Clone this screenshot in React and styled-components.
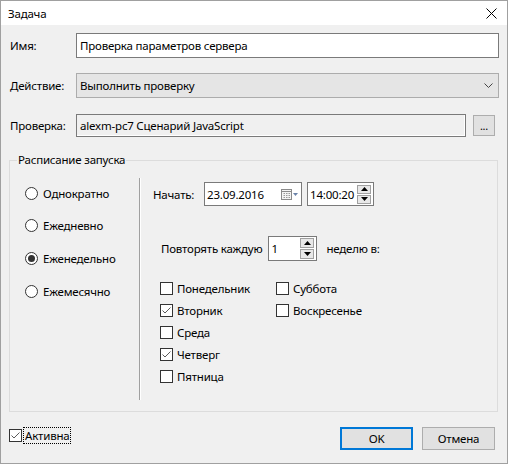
import React from 'react';
import styled, { createGlobalStyle } from 'styled-components';

const GlobalStyle = createGlobalStyle`
  html, body {
    margin: 0;
    padding: 0;
    background: #f0f0f0;
  }
  body {
    font-family: "Noto Sans", "Segoe UI", sans-serif;
    font-size: 11.5px;
    letter-spacing: -0.2px;
    color: #000;
  }
`;

const Window = styled.div`
  width: 508px;
  height: 464px;
  box-sizing: border-box;
  border: 1px solid #a0a0a0;
  background: #f0f0f0;
  display: flex;
  flex-direction: column;
`;

const TitleBar = styled.div`
  height: 24px;
  background: #ffffff;
  display: flex;
  align-items: center;
  justify-content: space-between;
  padding: 0 10px 0 7px;
`;

const Content = styled.div`
  flex: 1;
  display: flex;
  flex-direction: column;
  padding: 8px 8px 0 8px;
`;

const FieldRow = styled.div`
  display: grid;
  grid-template-columns: ${(p) => (p.$withButton ? '67px 1fr 29px' : '67px 1fr')};
  align-items: center;
  margin-top: ${(p) => p.$top || 0}px;
  padding-right: ${(p) => (p.$withButton ? 4 : 0)}px;
`;

const Label = styled.span`
  padding-left: 1px;
  white-space: nowrap;
`;

const TextBox = styled.div`
  box-sizing: border-box;
  height: ${(p) => p.$h || 25}px;
  border: 1px solid #7a7a7a;
  background: ${(p) => (p.$readOnly ? '#f0f0f0' : '#ffffff')};
  box-shadow: ${(p) => (p.$readOnly ? 'inset -1px -1px 0 #ffffff' : 'none')};
  display: flex;
  align-items: center;
  padding: 0 3px;
  white-space: nowrap;
  overflow: hidden;
`;

const Select = styled.div`
  box-sizing: border-box;
  height: 25px;
  border: 1px solid #acacac;
  background: #e5e5e5;
  display: flex;
  align-items: center;
  justify-content: space-between;
  padding: 0 5px 0 3px;
`;

const SmallButton = styled.div`
  box-sizing: border-box;
  height: 21px;
  margin-left: 7px;
  border: 1px solid #adadad;
  background: #e1e1e1;
  display: flex;
  align-items: center;
  justify-content: center;
  font-size: 11px;
  line-height: 1;
`;

const Group = styled.fieldset`
  margin: 15px 1px 0 0;
  padding: 0;
  border: 1px solid #dcdcdc;
  min-width: 0;
`;

const Legend = styled.legend`
  margin-left: 7px;
  padding: 0 1px;
  line-height: 16px;
`;

const GroupBody = styled.div`
  display: grid;
  grid-template-columns: 129px 2px 1fr;
  height: 243px;
`;

const RadioColumn = styled.div`
  display: flex;
  flex-direction: column;
  gap: 16.7px;
  padding: 17px 0 0 15px;
`;

const OptionRow = styled.label`
  display: flex;
  align-items: center;
  height: 16px;
  gap: ${(p) => p.$gap || 4}px;
  white-space: nowrap;
`;

const RadioCircle = styled.span`
  box-sizing: border-box;
  width: 13px;
  height: 13px;
  border-radius: 50%;
  border: 1px solid #333333;
  background: #ffffff;
  display: flex;
  align-items: center;
  justify-content: center;
  &::after {
    content: '';
    width: 7px;
    height: 7px;
    border-radius: 50%;
    background: ${(p) => (p.$checked ? '#333333' : 'transparent')};
  }
`;

const Separator = styled.div`
  margin: 10px 0 11px;
  border-left: 1px solid #a0a0a0;
  border-right: 1px solid #ffffff;
`;

const RightColumn = styled.div`
  display: flex;
  flex-direction: column;
  padding: 14px 0 0 12px;
`;

const StartRow = styled.div`
  display: flex;
  align-items: center;
`;

const StartLabel = styled.span`
  width: 51px;
`;

const Picker = styled.div`
  box-sizing: border-box;
  width: ${(p) => p.$w}px;
  height: ${(p) => p.$h || 24}px;
  margin-left: ${(p) => p.$ml || 0}px;
  border: 1px solid #7a7a7a;
  background: #ffffff;
  display: flex;
  align-items: center;
  justify-content: space-between;
  padding: 0 2px 0 2px;
`;

const SpinStack = styled.div`
  display: flex;
  flex-direction: column;
  gap: 1px;
`;

const SpinButton = styled.div`
  box-sizing: border-box;
  width: 14px;
  height: ${(p) => p.$h || 9}px;
  border: 1px solid #a0a0a0;
  background: #e8e8e8;
  display: flex;
  align-items: center;
  justify-content: center;
`;

const RepeatRow = styled.div`
  display: flex;
  align-items: center;
  gap: 6px;
  margin: 30px 0 0 8px;
`;

const RepeatTail = styled.span`
  margin-left: 3px;
`;

const DaysGrid = styled.div`
  display: grid;
  grid-template-columns: 116px auto;
  grid-auto-flow: column;
  grid-template-rows: repeat(5, 16px);
  row-gap: 6px;
  margin: 19px 0 0 7px;
  justify-content: start;
`;

const Box = styled.span`
  box-sizing: border-box;
  width: 13px;
  height: 13px;
  border: 1px solid #333333;
  background: #ffffff;
  display: flex;
  align-items: center;
  justify-content: center;
  flex-shrink: 0;
`;

const Footer = styled.div`
  display: flex;
  align-items: flex-start;
  margin-top: 15px;
  padding-right: 4px;
`;

const ActiveOption = styled.label`
  display: flex;
  align-items: center;
  gap: 2px;
  height: 16px;
  flex: 1;
`;

const FocusText = styled.span`
  outline: 1px dotted #000;
  outline-offset: 0;
  padding: 0 1px;
  line-height: 15px;
`;

const DialogButton = styled.div`
  box-sizing: border-box;
  width: 73px;
  height: 23px;
  margin-left: ${(p) => p.$ml || 0}px;
  border: ${(p) => (p.$primary ? '2px solid #0078d7' : '1px solid #adadad')};
  background: #e1e1e1;
  display: flex;
  align-items: center;
  justify-content: center;
`;

const Check = () => (
  <svg width="11" height="11" viewBox="0 0 11 11">
    <polyline points="1.5,5.5 4,8 9.5,2.5" fill="none" stroke="#5a5a5a" strokeWidth="1" />
  </svg>
);

const CheckOption = ({ checked, children }) => (
  <OptionRow $gap={4}>
    <Box>{checked && <Check />}</Box>
    <span>{children}</span>
  </OptionRow>
);

const Arrow = ({ up }) => (
  <svg width="7" height="4" viewBox="0 0 7 4">
    <polygon points={up ? '0,4 7,4 3.5,0' : '0,0 7,0 3.5,4'} fill="#000" />
  </svg>
);

const Spinner = ({ h }) => (
  <SpinStack>
    <SpinButton $h={h}><Arrow up /></SpinButton>
    <SpinButton $h={h}><Arrow /></SpinButton>
  </SpinStack>
);

const CalendarIcon = () => (
  <svg width="18" height="12" viewBox="0 0 18 12">
    <rect x="0.5" y="1.5" width="10" height="10" fill="#f4f4f4" stroke="#8a8a8a" />
    <line x1="0.5" y1="3.5" x2="10.5" y2="3.5" stroke="#8a8a8a" />
    {[3, 5.5, 8].map((x) =>
      [5.5, 7.5, 9.5].map((y) => (
        <rect key={`${x}-${y}`} x={x - 0.5} y={y - 0.5} width="1.5" height="1" fill="#9a9a9a" />
      ))
    )}
    <polygon points="12,5 17,5 14.5,8" fill="#6a82a8" />
  </svg>
);

const Chevron = () => (
  <svg width="9" height="5" viewBox="0 0 9 5">
    <polyline points="0.5,0.5 4.5,4.5 8.5,0.5" fill="none" stroke="#444" strokeWidth="1" />
  </svg>
);

const CloseIcon = () => (
  <svg width="11" height="11" viewBox="0 0 11 11">
    <line x1="0.5" y1="0.5" x2="10.5" y2="10.5" stroke="#000" strokeWidth="1" />
    <line x1="10.5" y1="0.5" x2="0.5" y2="10.5" stroke="#000" strokeWidth="1" />
  </svg>
);

const schedule = [
  { label: 'Однократно', checked: false },
  { label: 'Ежедневно', checked: false },
  { label: 'Еженедельно', checked: true },
  { label: 'Ежемесячно', checked: false },
];

const days = [
  { label: 'Понедельник', checked: false },
  { label: 'Вторник', checked: true },
  { label: 'Среда', checked: false },
  { label: 'Четверг', checked: true },
  { label: 'Пятница', checked: false },
  { label: 'Суббота', checked: false },
  { label: 'Воскресенье', checked: false },
];

export default function App() {
  return (
    <>
      <GlobalStyle />
      <Window>
        <TitleBar>
          <span>Задача</span>
          <CloseIcon />
        </TitleBar>
        <Content>
          <FieldRow>
            <Label>Имя:</Label>
            <TextBox>Проверка параметров сервера</TextBox>
          </FieldRow>
          <FieldRow $top={15}>
            <Label>Действие:</Label>
            <Select>
              <span>Выполнить проверку</span>
              <Chevron />
            </Select>
          </FieldRow>
          <FieldRow $top={16} $withButton>
            <Label>Проверка:</Label>
            <TextBox $h={23} $readOnly>alexm-pc7 Сценарий JavaScript</TextBox>
            <SmallButton>...</SmallButton>
          </FieldRow>

          <Group>
            <Legend>Расписание запуска</Legend>
            <GroupBody>
              <RadioColumn>
                {schedule.map((s) => (
                  <OptionRow key={s.label} $gap={5}>
                    <RadioCircle $checked={s.checked} />
                    <span>{s.label}</span>
                  </OptionRow>
                ))}
              </RadioColumn>
              <Separator />
              <RightColumn>
                <StartRow>
                  <StartLabel>Начать:</StartLabel>
                  <Picker $w={98}>
                    <span>23.09.2016</span>
                    <CalendarIcon />
                  </Picker>
                  <Picker $w={67} $ml={5}>
                    <span>14:00:20</span>
                    <Spinner h={9} />
                  </Picker>
                </StartRow>
                <RepeatRow>
                  <span>Повторять каждую</span>
                  <Picker $w={49} $h={25}>
                    <span>1</span>
                    <Spinner h={10} />
                  </Picker>
                  <RepeatTail>неделю в:</RepeatTail>
                </RepeatRow>
                <DaysGrid>
                  {days.map((d) => (
                    <CheckOption key={d.label} checked={d.checked}>
                      {d.label}
                    </CheckOption>
                  ))}
                </DaysGrid>
              </RightColumn>
            </GroupBody>
          </Group>

          <Footer>
            <ActiveOption>
              <Box><Check /></Box>
              <FocusText>Активна</FocusText>
            </ActiveOption>
            <DialogButton $primary>OK</DialogButton>
            <DialogButton $ml={9}>Отмена</DialogButton>
          </Footer>
        </Content>
      </Window>
    </>
  );
}
